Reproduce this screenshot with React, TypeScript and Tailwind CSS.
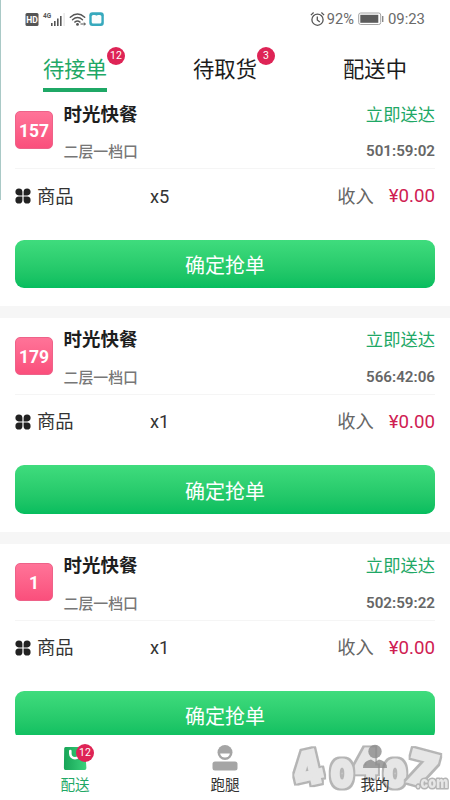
import * as React from 'react';
import clsx from 'clsx';

// types
type Order = {
    number: number;
    shop: string;
    place: string;
    timer: string;
    quantity: number;
    income: string;
};

type TabProps = {
    label: string;
    count?: number;
    active?: boolean;
};

type NavItemProps = {
    label: string;
    active?: boolean;
    children: React.ReactNode;
};

const orders: Order[] = [
    {
        number: 157,
        shop: '时光快餐',
        place: '二层一档口',
        timer: '501:59:02',
        quantity: 5,
        income: '¥0.00'
    },
    {
        number: 179,
        shop: '时光快餐',
        place: '二层一档口',
        timer: '566:42:06',
        quantity: 1,
        income: '¥0.00'
    },
    {
        number: 1,
        shop: '时光快餐',
        place: '二层一档口',
        timer: '502:59:22',
        quantity: 1,
        income: '¥0.00'
    }
];

function StatusBar() {
    return (
        <div className="flex h-[38px] shrink-0 items-center justify-between px-[25px] text-[#6a6a6a]">
            <svg
                width="80"
                height="18"
                viewBox="0 0 80 18"
                className="-mt-px">
                <rect x="0.5" y="3" width="13" height="13" rx="1.5" fill="#555" />
                <text
                    x="7"
                    y="12.6"
                    textAnchor="middle"
                    fontSize="8.5"
                    fontWeight="700"
                    fill="#fff">
                    HD
                </text>
                <text
                    x="18"
                    y="8"
                    fontSize="6.5"
                    fontWeight="700"
                    fill="#555">
                    4G
                </text>
                <g fill="#555">
                    <rect x="26" y="13" width="1.6" height="3" />
                    <rect x="29" y="11" width="1.6" height="5" />
                    <rect x="32" y="8.5" width="1.6" height="7.5" />
                    <rect x="35" y="6" width="1.6" height="10" />
                    <rect x="38.6" y="3" width="1" height="13" fill="#ddd" />
                </g>
                <g
                    fill="none"
                    stroke="#555"
                    strokeWidth="1.4"
                    strokeLinecap="round">
                    <path d="M45.3 7.2Q52.5.8 59.7 7.2" />
                    <path d="M47.5 9.7Q52.5 5.2 57.5 9.7" />
                    <path d="M49.8 12.1Q52.5 9.9 55 12.1" />
                </g>
                <circle cx="52.5" cy="14.4" r="1.4" fill="#555" />
                <path
                    d="M55.5 14h5M58.8 12.6l1.6 1.4-1.6 1.4"
                    fill="none"
                    stroke="#555"
                    strokeWidth="1"
                />
                <rect x="64.3" y="2.3" width="14.5" height="13.7" rx="3" fill="#37a9bd" />
                <rect x="66.7" y="5" width="9.7" height="8.6" rx="1.5" fill="#fafdfd" />
                <path d="M70.3 5q1.2 1 2.4 0z" fill="#37a9bd" />
            </svg>

            <div className="flex items-center pt-px text-[14.6px]">
                <svg
                    width="15"
                    height="16"
                    viewBox="0 0 15 16"
                    fill="none"
                    stroke="#555"
                    strokeWidth="1.3"
                    className="mr-[2px]">
                    <circle cx="7.5" cy="8.7" r="5.6" />
                    <path d="M7.3 5.5v3.4l2.5 2.1M.9 4.1l2.7-2.6M14.1 4.1l-2.7-2.6" />
                </svg>
                <span className="pt-px">92%</span>
                <svg
                    width="26"
                    height="14"
                    viewBox="0 0 26 14"
                    className="mr-[4px] ml-[4px]">
                    <rect
                        x="0.7"
                        y="1"
                        width="22"
                        height="11.5"
                        rx="2"
                        fill="#fff"
                        stroke="#a4a4a4"
                    />
                    <rect x="2.3" y="2.8" width="18" height="8" fill="#5c5c5c" />
                    <rect x="24" y="4" width="1.4" height="6" fill="#888" />
                </svg>
                <span className="text-[14.9px]">09:23</span>
            </div>
        </div>
    );
}

function CountBadge({ count }: { count: number }) {
    return (
        <span className="flex h-[18px] w-[18px] items-center justify-center rounded-full bg-[#de2456] pt-px text-[10.5px] leading-none text-white">
            {count}
        </span>
    );
}

function Tab({ label, count, active }: TabProps) {
    return (
        <button className="flex justify-center">
            <span
                className={clsx(
                    'relative h-[54.3px] border-b-[4px] pt-[16px] text-[21.3px] leading-[31px]',
                    active
                        ? 'border-[#1fa866] text-[#1fa866]'
                        : 'border-transparent text-[#1c1c1c]'
                )}>
                {label}
                {count !== undefined && (
                    <span className="absolute top-[9px] -right-[18px]">
                        <CountBadge count={count} />
                    </span>
                )}
            </span>
        </button>
    );
}

function GoodsIcon() {
    return (
        <svg width="16" height="16" viewBox="0 0 16 16" fill="#222">
            <path d="M7.4 7.4H3.8A3.5 3.5 0 1 1 7.4 3.8z" />
            <path d="M8.6 7.4h3.6A3.5 3.5 0 1 0 8.6 3.8z" />
            <path d="M7.4 8.6H3.8a3.5 3.5 0 1 0 3.6 3.6z" />
            <path d="M8.6 8.6h3.6a3.5 3.5 0 1 1-3.6 3.6z" />
        </svg>
    );
}

function OrderCard({ order }: { order: Order }) {
    return (
        <article className="h-[213.7px] shrink-0 bg-white px-[15px]">
            <header className="flex h-[77px] border-b border-[#f5f5f5]">
                <span className="mt-[19px] flex h-[38px] w-[38px] items-center justify-center rounded-[5px] border border-[#ee6289] bg-linear-to-b from-[#ff7398] to-[#fa4f7c] pt-[2px] text-[17.5px] font-bold text-white">
                    {order.number}
                </span>
                <div className="ml-[10.5px] flex flex-col pt-[10.5px]">
                    <h2 className="text-[18.5px] leading-[25px] font-bold text-[#1e1e1e]">
                        {order.shop}
                    </h2>
                    <p className="mt-[13.5px] text-[14.9px] leading-[22px] font-medium text-[#777]">
                        {order.place}
                    </p>
                </div>
                <div className="ml-auto flex flex-col items-end pt-[10.5px]">
                    <span className="text-[17.3px] leading-[25px] text-[#1fa866]">
                        立即送达
                    </span>
                    <span className="mt-[12.5px] text-[15.2px] leading-[22px] font-semibold text-[#666]">
                        {order.timer}
                    </span>
                </div>
            </header>

            <div className="flex h-[54px] items-center text-[18.3px]">
                <GoodsIcon />
                <span className="ml-[6px] w-[113px] text-[#333]">商品</span>
                <span className="text-[#333]">x{order.quantity}</span>
                <span className="ml-auto text-[#666]">收入</span>
                <span className="ml-[15px] text-[18.7px] text-[#cf2052]">
                    {order.income}
                </span>
            </div>

            <button className="mt-[16.3px] flex h-[48.7px] w-full items-center justify-center rounded-[9px] bg-linear-to-b from-[#3fdc7d] to-[#05bd5e] pt-[4px] text-[20px] text-white">
                确定抢单
            </button>
        </article>
    );
}

function NavItem({ label, active, children }: NavItemProps) {
    return (
        <button className="flex flex-col items-center">
            <span className="h-[38px] pt-[8px]">{children}</span>
            <span
                className={clsx(
                    'relative z-20 text-[14.6px] leading-[24px]',
                    active ? 'text-[#1fa866]' : 'text-[#333]'
                )}>
                {label}
            </span>
        </button>
    );
}

// site stamp that lies over the bottom right corner
function Stamp() {
    return (
        <svg
            width="160"
            height="58"
            viewBox="0 0 160 58"
            className="absolute right-0 bottom-0 z-10 overflow-visible opacity-90"
            fontFamily="Inter, sans-serif"
            fontWeight="900"
            fill="#e4e4e4"
            stroke="#e4e4e4"
            strokeWidth="3"
            strokeLinejoin="miter"
            textAnchor="middle">
            <defs>
                {/* grey rim round each light digit */}
                <filter id="rim" x="-30%" y="-30%" width="160%" height="160%">
                    <feMorphology
                        in="SourceAlpha"
                        operator="dilate"
                        radius="2"
                        result="grown"
                    />
                    <feFlood floodColor="#adadad" />
                    <feComposite in2="grown" operator="in" result="edge" />
                    <feMerge>
                        <feMergeNode in="edge" />
                        <feMergeNode in="SourceGraphic" />
                    </feMerge>
                </filter>
            </defs>
            <g filter="url(#rim)">
                <text transform="translate(21 42) rotate(-13) scale(0.92 1)" fontSize="45">
                    4
                </text>
            </g>
            <g filter="url(#rim)">
                <text transform="translate(76 35) scale(0.88 1)" fontSize="38">
                    4
                </text>
            </g>
            <g filter="url(#rim)">
                <text transform="translate(52 44.5) scale(0.84 1)" fontSize="37">
                    0
                </text>
            </g>
            <g filter="url(#rim)">
                <text transform="translate(105 44.5) scale(0.84 1)" fontSize="37">
                    0
                </text>
            </g>
            <g filter="url(#rim)">
                <text transform="translate(128 42) rotate(15) scale(1.05 1)" fontSize="44">
                    7
                </text>
            </g>
            <text
                transform="translate(142 45.5) scale(0.82 1)"
                fontSize="15.5"
                stroke="#adadad"
                strokeWidth="3.2"
                strokeLinejoin="round"
                paintOrder="stroke">
                .com
            </text>
        </svg>
    );
}

function BottomNav() {
    return (
        <nav className="relative z-10 grid h-[65px] shrink-0 grid-cols-3 bg-white">
            <NavItem label="配送" active>
                <span className="relative block h-[27px] w-[24px]">
                    <svg
                        width="24"
                        height="27"
                        viewBox="0 0 24 27"
                        className="block">
                        <defs>
                            <linearGradient id="bag" x1="0" y1="0" x2="1" y2="0">
                                <stop offset="0" stopColor="#17a457" />
                                <stop offset="1" stopColor="#3bd27b" />
                            </linearGradient>
                        </defs>
                        <path
                            d="M2.5 4h18q1.5 0 1.6 1.5L23.4 25q0 1.9-1.8 1.9H2.4Q.9 26.9.9 25L1.2 5.5Q1.2 4 2.5 4z"
                            fill="url(#bag)"
                        />
                        <path
                            d="M7.3 8v2.5a4.7 4.7 0 0 0 9.4 0V8"
                            fill="none"
                            stroke="#fff"
                            strokeWidth="2.6"
                            strokeLinecap="round"
                        />
                    </svg>
                    <span className="absolute top-[1px] left-[13px]">
                        <CountBadge count={12} />
                    </span>
                </span>
            </NavItem>
            <NavItem label="跑腿">
                <svg width="26" height="28" viewBox="0 0 26 28" fill="#a5a5a5">
                    <circle cx="13" cy="9.5" r="7.5" />
                    <path d="M8.2 10.5h9.6a4.8 4 0 0 1-9.6 0z" fill="#fff" />
                    <rect x="0.5" y="18.5" width="25" height="9" rx="2.5" />
                </svg>
            </NavItem>
            <NavItem label="我的">
                <svg
                    width="26"
                    height="28"
                    viewBox="0 0 26 28"
                    fill="#8b8b8b"
                    className="relative z-20 opacity-80">
                    <circle cx="13" cy="8.5" r="6.7" />
                    <path d="M1 25q0-7 8-8.5l4 2.5 4-2.5q8 1.5 8 8.5z" />
                </svg>
            </NavItem>
            <Stamp />
        </nav>
    );
}

export default function App() {
    return (
        <main className="relative flex h-[800px] w-[450px] flex-col overflow-hidden bg-white font-[Roboto,'Noto_Sans_CJK_SC',sans-serif]">
            <span className="absolute top-0 left-0 h-[200px] w-px bg-[#a9c9c6]" />
            <StatusBar />

            <div className="grid h-[54.3px] shrink-0 grid-cols-3">
                <Tab label="待接单" count={12} active />
                <Tab label="待取货" count={3} />
                <Tab label="配送中" />
            </div>

            <section className="flex min-h-0 flex-1 flex-col gap-[12px] overflow-hidden bg-[#f6f6f6]">
                {orders.map(order => (
                    <OrderCard key={order.number} order={order} />
                ))}
            </section>

            <BottomNav />
        </main>
    );
}
